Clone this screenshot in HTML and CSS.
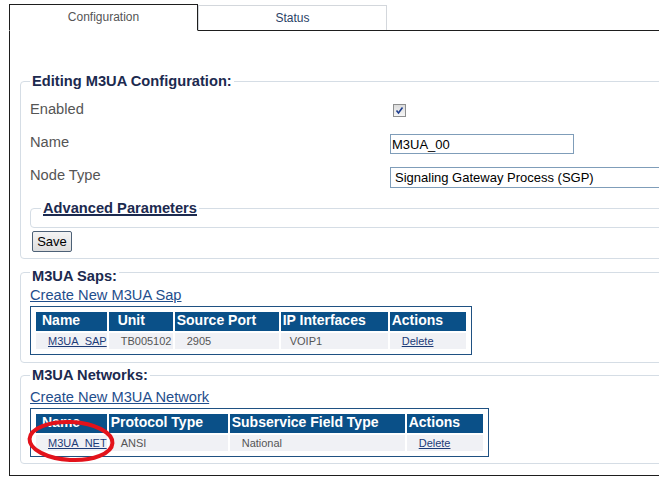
FILE: index.html
```html
<!DOCTYPE html>
<html lang="en">

<head>
    <meta charset="UTF-8" />
    <title>M3UA Configuration</title>
    <link rel="stylesheet" href="styles.css">
</head>

<body>
    <div class="pestanas">
        <div class="pestana pestana-activa">Configuration</div>
        <div class="pestana">Status</div>
    </div>

    <div class="panel">
        <fieldset class="grupo">
            <legend>Editing M3UA Configuration:</legend>

            <div class="fila">
                <label class="etiqueta">Enabled</label>
                <span class="casilla">
                    <svg width="9" height="9" viewBox="0 0 9 9">
                        <path d="M1.5 4.5 L3.5 7 L7.5 1.5" fill="none" stroke="#1f3f8f" stroke-width="1.6" />
                    </svg>
                </span>
            </div>

            <div class="fila">
                <label class="etiqueta" for="nombre">Name</label>
                <input type="text" id="nombre" class="entrada" value="M3UA_00">
            </div>

            <div class="fila fila-corta">
                <label class="etiqueta" for="tipo">Node Type</label>
                <select id="tipo" class="selector">
                    <option>Signaling Gateway Process (SGP)</option>
                </select>
            </div>

            <fieldset class="avanzado">
                <legend><a href="#">Advanced Parameters</a></legend>
            </fieldset>

            <button class="boton">Save</button>
        </fieldset>

        <fieldset class="grupo grupo-saps">
            <legend>M3UA Saps:</legend>
            <div class="enlace-crear"><a href="#">Create New M3UA Sap</a></div>
            <table class="tabla">
                <thead>
                    <tr>
                        <th class="col-nombre">Name</th>
                        <th class="col-unidad">Unit</th>
                        <th class="col-puerto">Source Port</th>
                        <th class="col-ip">IP Interfaces</th>
                        <th class="col-acciones">Actions</th>
                    </tr>
                </thead>
                <tbody>
                    <tr>
                        <td><a href="#">M3UA_SAP</a></td>
                        <td>TB005102</td>
                        <td>2905</td>
                        <td class="celda-ip">VOIP1</td>
                        <td><a href="#">Delete</a></td>
                    </tr>
                </tbody>
            </table>
        </fieldset>

        <fieldset class="grupo grupo-redes">
            <legend>M3UA Networks:</legend>
            <div class="enlace-crear"><a href="#">Create New M3UA Network</a></div>
            <table class="tabla">
                <thead>
                    <tr>
                        <th class="col-nombre">Name</th>
                        <th class="col-protocolo">Protocol Type</th>
                        <th class="col-servicio">Subservice Field Type</th>
                        <th class="col-acciones2">Actions</th>
                    </tr>
                </thead>
                <tbody>
                    <tr>
                        <td class="celda-marcada">
                            <a href="#">M3UA_NET</a>
                            <!-- marca roja hecha a mano -->
                            <svg class="ovalo" width="92" height="46" viewBox="0 0 92 46">
                                <ellipse cx="46" cy="23" rx="41.5" ry="19" fill="none" stroke="#e3121b"
                                    stroke-width="4" transform="rotate(3 46 23)" />
                            </svg>
                        </td>
                        <td>ANSI</td>
                        <td>National</td>
                        <td><a href="#">Delete</a></td>
                    </tr>
                </tbody>
            </table>
        </fieldset>
    </div>
</body>

</html>
```

FILE: styles.css
```css
html,
body {
    overflow: hidden;
}

body {
    margin: 0;
    padding: 4px 0 0 9px;
    font-family: "Liberation Sans", Arial, sans-serif;
    background-color: white;
    color: #555;
}

/* pestañas */
.pestanas {
    display: flex;
    align-items: flex-end;
}

.pestana {
    width: 187px;
    height: 24px;
    line-height: 24px;
    text-align: center;
    font-size: 12px;
    color: #2a3f66;
    border: 1px solid #d3d7dc;
    border-bottom: none;
}

.pestana-activa {
    height: 25px;
    line-height: 25px;
    color: #555;
    border-color: #1e1e1e;
    border-bottom: 1px solid white;
    margin-bottom: -1px;
    position: relative;
    z-index: 1;
}

.panel {
    width: 720px;
    border-left: 1px solid #1e1e1e;
    border-top: 1px solid #1e1e1e;
    border-bottom: 1px solid #1e1e1e;
    padding: 41px 0 11px 10px;
}

/* grupos */
.grupo,
.avanzado {
    margin: 0;
    border: 1px solid #d5dde5;
    border-radius: 4px;
    padding: 0 9px 6px 9px;
}

.grupo legend,
.avanzado legend {
    padding: 0 2px;
    font-size: 11pt;
    line-height: 18px;
    font-weight: bold;
    color: #1c2a4f;
}

.grupo-saps {
    padding-bottom: 7px;
}

.grupo-saps legend {
    padding-top: 8px;
}

.grupo-redes {
    margin-top: 3px;
}

.fila {
    display: flex;
    align-items: flex-start;
    height: 33px;
}

.fila:first-of-type {
    margin-top: 3px;
}

.fila-corta {
    height: 32px;
}

.etiqueta {
    width: 360px;
    font-size: 11pt;
    line-height: 33px;
    color: #555;
}

.fila-corta .etiqueta {
    line-height: 32px;
}

.casilla {
    margin: 11px 0 0 3px;
    width: 11px;
    height: 11px;
    border: 1px solid #8e8f8f;
    background: linear-gradient(#dcdcdc, #f6f6f6);
    display: flex;
    align-items: center;
    justify-content: center;
}

.entrada,
.selector {
    margin-top: 8px;
    font-family: "Liberation Sans", Arial, sans-serif;
    font-size: 13px;
    color: black;
    border: 1px solid #7f9db9;
    box-sizing: border-box;
    background-color: white;
}

.entrada {
    width: 184px;
    height: 20px;
    padding: 0 1px;
}

.selector {
    width: 300px;
    height: 21px;
    padding: 0 4px;
    appearance: none;
    border-radius: 0;
}

.avanzado {
    margin-top: 8px;
    padding: 0 10px 10px 10px;
}

.avanzado legend a {
    color: #1c2a4f;
    text-decoration-thickness: 2px;
}

.boton {
    display: block;
    margin: 3px 0 0 2px;
    width: 40px;
    height: 21px;
    padding: 0;
    font-family: "Liberation Sans", Arial, sans-serif;
    font-size: 13px;
    color: black;
    border: 1px solid #4d6177;
    border-radius: 2px;
    background: linear-gradient(#f4f4f4, #dedede);
}

/* listas */
.enlace-crear {
    margin-top: 1px;
    line-height: 18px;
    font-size: 11pt;
}

.grupo-redes .enlace-crear {
    margin-top: 4px;
}

.enlace-crear a {
    color: #1f4e8c;
}

.tabla {
    margin-top: 2px;
    border: 1px solid #1f5182;
    border-spacing: 2px;
    padding: 3px;
}

.tabla th,
.tabla td {
    box-sizing: border-box;
    text-align: left;
    white-space: nowrap;
}

.tabla th {
    height: 19px;
    padding: 0 0 2px 2px;
    background-color: #0a5088;
    color: white;
    font-size: 14px;
    line-height: 17px;
    font-weight: bold;
}

.tabla td {
    height: 16px;
    padding: 1px 0 1px 12px;
    background-color: #f0f1f5;
    font-size: 11px;
    line-height: 14px;
    color: #555;
}

.tabla td a {
    color: #1c3b78;
}

.col-nombre {
    width: 70px;
}

.tabla th.col-nombre {
    padding-left: 6px;
}

.tabla th.col-unidad {
    width: 64px;
    padding-left: 9px;
}

.col-puerto {
    width: 104px;
}

.col-ip {
    width: 107px;
}

.col-acciones {
    width: 76px;
}

.col-protocolo {
    width: 119px;
}

.col-servicio {
    width: 175px;
}

.col-acciones2 {
    width: 76px;
}

.tabla td.celda-ip {
    padding-left: 9px;
}

.celda-marcada {
    position: relative;
}

.ovalo {
    position: absolute;
    left: -11px;
    top: -17px;
    overflow: visible;
}
```
